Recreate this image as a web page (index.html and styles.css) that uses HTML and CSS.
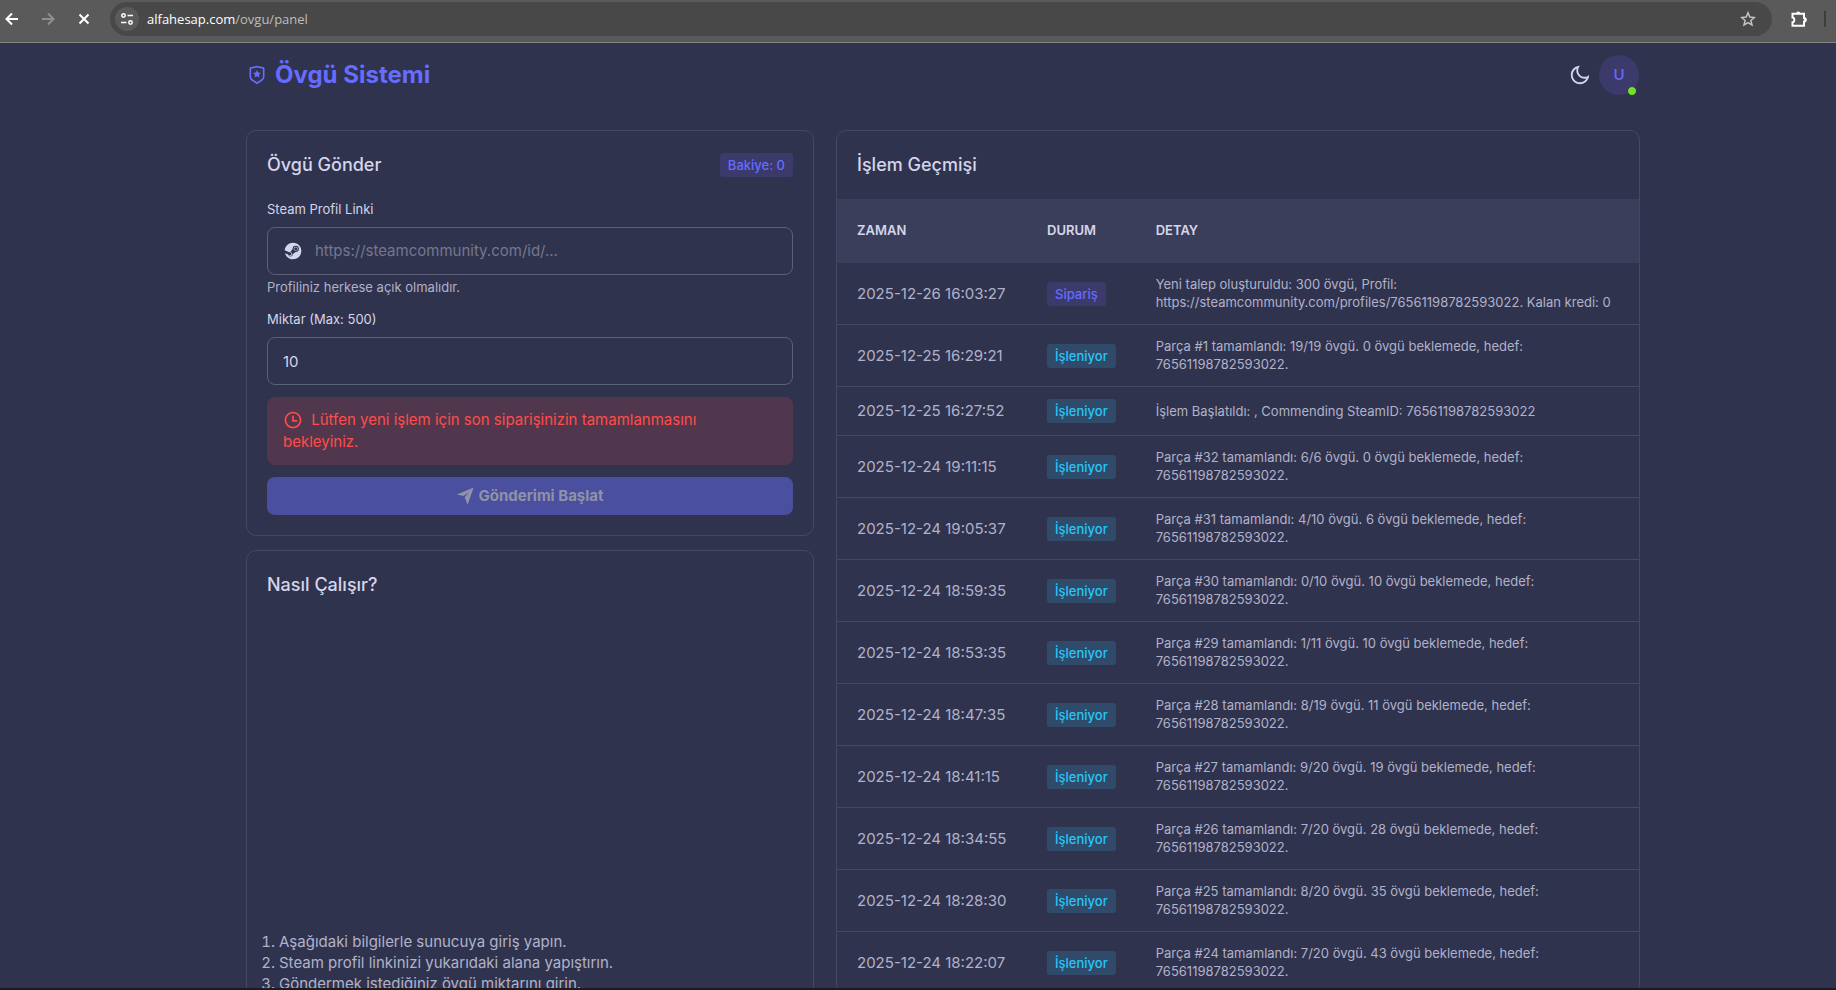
FILE: index.html
```html
<!DOCTYPE html>
<html lang="tr">

<head>
  <meta charset="UTF-8">
  <meta name="viewport" content="width=device-width, initial-scale=1.0">
  <title>Övgü Sistemi</title>
  <link rel="stylesheet" href="styles.css">
</head>

<body>
  <!-- browser bar -->
  <header class="browser">
    <button class="browser-btn" type="button" aria-label="Geri">
      <svg width="16" height="16" viewBox="0 0 16 16"><path d="M14 8H3M8 2.5L2.5 8L8 13.5" /></svg>
    </button>
    <button class="browser-btn" type="button" aria-label="İleri" disabled>
      <svg width="16" height="16" viewBox="0 0 16 16"><path d="M2 8h11M8 2.5L13.5 8L8 13.5" /></svg>
    </button>
    <button class="browser-btn" type="button" aria-label="Durdur">
      <svg width="16" height="16" viewBox="0 0 16 16"><path d="M3.5 3.5l9 9M12.5 3.5l-9 9" /></svg>
    </button>
    <div class="address">
      <button class="site-info" type="button" aria-label="Site bilgileri">
        <svg width="14" height="14" viewBox="0 0 14 14"><circle cx="3.5" cy="3.5" r="1.7" /><path d="M7.5 3.5H13M1 10.5h5.5" /><circle cx="10.5" cy="10.5" r="1.7" /></svg>
      </button>
      <a class="url" href="#">alfahesap.com<span>/ovgu/panel</span></a>
      <button class="star" type="button" aria-label="Yer işareti">
        <svg width="16" height="16" viewBox="0 0 16 16"><path d="M8 1.8l1.8 4.3 4.6.4-3.5 3 1.1 4.5L8 11.6 4 14l1.1-4.500-3.500-3 4.600-.4z" /></svg>
      </button>
    </div>
    <button class="browser-btn extensions" type="button" aria-label="Uzantılar">
      <svg width="18" height="18" viewBox="0 0 18 18"><path d="M2.5 3.7H14V8a1.800 1.800 0 0 1 0 3.600v4.100H2.500v-3.500c2.400-.3 2.400-4.200 0-4.600z" /><path class="fill" d="M6.200 3.500a2 2 0 0 1 4 0zM14.200 7.700a2 2 0 0 1 0 4z" /></svg>
    </button>
    <span class="browser-sep"></span>
  </header>

  <div class="page">
    <nav class="navbar">
      <a class="brand" href="#">
        <svg width="20" height="20" viewBox="0 0 24 24"><path d="M12 1L20.217 2.826C20.674 2.928 21 3.333 21 3.802V13.789C21 15.795 19.997 17.669 18.328 18.781L12 23L5.672 18.781C4.002 17.668 3 15.795 3 13.789V3.802C3 3.333 3.326 2.928 3.783 2.826L12 1ZM12 3.049L5 4.604V13.789C5 15.126 5.668 16.375 6.781 17.117L12 20.597L17.219 17.117C18.332 16.375 19 15.127 19 13.789V4.604L12 3.049ZM12 13.500L9.061 15.045L9.622 11.773L7.245 9.455L10.531 8.977L12 6L13.470 8.977L16.755 9.455L14.378 11.773L14.939 15.045L12 13.500Z" /></svg>
        <h1>Övgü Sistemi</h1>
      </a>
      <div class="nav-right">
        <button class="theme-btn" type="button" aria-label="Tema">
          <svg width="22" height="22" viewBox="0 0 24 24"><path d="M10 7C10 10.866 13.134 14 17 14C18.958 14 20.729 13.196 21.999 11.899C22 11.933 22 11.966 22 12C22 17.523 17.523 22 12 22C6.477 22 2 17.523 2 12C2 6.477 6.477 2 12 2C12.034 2 12.067 2 12.101 2.001C10.804 3.271 10 5.042 10 7ZM4 12C4 16.418 7.582 20 12 20C15.058 20 17.716 18.284 19.062 15.762C18.395 15.919 17.705 16 17 16C12.029 16 8 11.971 8 7C8 6.295 8.081 5.605 8.238 4.938C5.716 6.284 4 8.942 4 12Z" /></svg>
        </button>
        <button class="avatar" type="button">U<span class="online"></span></button>
      </div>
    </nav>

    <main class="row">
      <div class="col-left">
        <section class="card card-form">
          <div class="card-head">
            <h2>Övgü Gönder</h2>
            <span class="badge badge-primary">Bakiye: 0</span>
          </div>
          <form>
            <label for="steam-link">Steam Profil Linki</label>
            <div class="input-group">
              <svg width="20" height="20" viewBox="0 0 24 24"><path d="M12.004 2C6.740 2 2.427 6.060 2.020 11.220L7.390 13.440A2.840 2.840 0 0 1 9.140 12.940L11.530 9.480V9.430A3.780 3.780 0 1 1 15.310 13.210H15.220L11.810 15.650C11.810 17.300 10.560 18.540 8.990 18.540A2.840 2.840 0 0 1 6.210 16.270L2.370 14.680C3.560 18.900 7.420 22 12.004 22A10 10 0 1 0 12.004 2ZM8.280 17.170L7.050 16.660A2.130 2.130 0 1 0 8.200 13.790L9.470 14.310A1.570 1.570 0 0 1 8.280 17.170ZM17.830 9.430A2.520 2.520 0 1 0 12.790 9.430A2.520 2.520 0 0 0 17.830 9.430ZM13.420 9.420A1.890 1.890 0 1 1 17.200 9.420A1.890 1.890 0 0 1 13.420 9.420Z" /></svg>
              <input id="steam-link" type="text" placeholder="https://steamcommunity.com/id/...">
            </div>
            <p class="hint">Profiliniz herkese açık olmalıdır.</p>
            <label for="amount">Miktar (Max: 500)</label>
            <input id="amount" class="input" type="text" inputmode="numeric" value="10">
            <div class="alert">
              <svg width="20" height="20" viewBox="0 0 24 24"><path d="M12 22C6.477 22 2 17.523 2 12C2 6.477 6.477 2 12 2C17.523 2 22 6.477 22 12C22 17.523 17.523 22 12 22ZM12 20C16.418 20 20 16.418 20 12C20 7.582 16.418 4 12 4C7.582 4 4 7.582 4 12C4 16.418 7.582 20 12 20ZM13 12H17V14H11V7H13V12Z" /></svg>
              Lütfen yeni işlem için son siparişinizin tamamlanmasını bekleyiniz.
            </div>
            <button class="submit" type="submit" disabled>
              <svg width="18" height="18" viewBox="0 0 24 24"><path d="M1 10L23.500 0.500L15.500 23.500L11.500 13.500L17 7L10 12Z" /></svg>
              Gönderimi Başlat
            </button>
          </form>
        </section>

        <section class="card card-how">
          <h2>Nasıl Çalışır?</h2>
          <div class="video"></div>
          <ol>
            <li>Aşağıdaki bilgilerle sunucuya giriş yapın.</li>
            <li>Steam profil linkinizi yukarıdaki alana yapıştırın.</li>
            <li>Göndermek istediğiniz övgü miktarını girin.</li>
          </ol>
        </section>
      </div>

      <section class="card card-history">
        <h2>İşlem Geçmişi</h2>
        <table>
          <thead>
            <tr>
              <th class="time">ZAMAN</th>
              <th class="state">DURUM</th>
              <th>DETAY</th>
            </tr>
          </thead>
          <tbody>
            <tr>
              <td>2025-12-26 16:03:27</td>
              <td><span class="badge badge-primary">Sipariş</span></td>
              <td class="detail">Yeni talep oluşturuldu: 300 övgü, Profil: https://steamcommunity.com/profiles/76561198782593022. Kalan kredi: 0</td>
            </tr>
            <tr>
              <td>2025-12-25 16:29:21</td>
              <td><span class="badge badge-info">İşleniyor</span></td>
              <td class="detail">Parça #1 tamamlandı: 19/19 övgü. 0 övgü beklemede, hedef: 76561198782593022.</td>
            </tr>
            <tr>
              <td>2025-12-25 16:27:52</td>
              <td><span class="badge badge-info">İşleniyor</span></td>
              <td class="detail">İşlem Başlatıldı: , Commending SteamID: 76561198782593022</td>
            </tr>
            <tr>
              <td>2025-12-24 19:11:15</td>
              <td><span class="badge badge-info">İşleniyor</span></td>
              <td class="detail">Parça #32 tamamlandı: 6/6 övgü. 0 övgü beklemede, hedef: 76561198782593022.</td>
            </tr>
            <tr>
              <td>2025-12-24 19:05:37</td>
              <td><span class="badge badge-info">İşleniyor</span></td>
              <td class="detail">Parça #31 tamamlandı: 4/10 övgü. 6 övgü beklemede, hedef: 76561198782593022.</td>
            </tr>
            <tr>
              <td>2025-12-24 18:59:35</td>
              <td><span class="badge badge-info">İşleniyor</span></td>
              <td class="detail">Parça #30 tamamlandı: 0/10 övgü. 10 övgü beklemede, hedef: 76561198782593022.</td>
            </tr>
            <tr>
              <td>2025-12-24 18:53:35</td>
              <td><span class="badge badge-info">İşleniyor</span></td>
              <td class="detail">Parça #29 tamamlandı: 1/11 övgü. 10 övgü beklemede, hedef: 76561198782593022.</td>
            </tr>
            <tr>
              <td>2025-12-24 18:47:35</td>
              <td><span class="badge badge-info">İşleniyor</span></td>
              <td class="detail">Parça #28 tamamlandı: 8/19 övgü. 11 övgü beklemede, hedef: 76561198782593022.</td>
            </tr>
            <tr>
              <td>2025-12-24 18:41:15</td>
              <td><span class="badge badge-info">İşleniyor</span></td>
              <td class="detail">Parça #27 tamamlandı: 9/20 övgü. 19 övgü beklemede, hedef: 76561198782593022.</td>
            </tr>
            <tr>
              <td>2025-12-24 18:34:55</td>
              <td><span class="badge badge-info">İşleniyor</span></td>
              <td class="detail">Parça #26 tamamlandı: 7/20 övgü. 28 övgü beklemede, hedef: 76561198782593022.</td>
            </tr>
            <tr>
              <td>2025-12-24 18:28:30</td>
              <td><span class="badge badge-info">İşleniyor</span></td>
              <td class="detail">Parça #25 tamamlandı: 8/20 övgü. 35 övgü beklemede, hedef: 76561198782593022.</td>
            </tr>
            <tr>
              <td>2025-12-24 18:22:07</td>
              <td><span class="badge badge-info">İşleniyor</span></td>
              <td class="detail">Parça #24 tamamlandı: 7/20 övgü. 43 övgü beklemede, hedef: 76561198782593022.</td>
            </tr>
          </tbody>
        </table>
      </section>
    </main>
  </div>
</body>

</html>
```
FILE: styles.css
```css
* {
  box-sizing: border-box;
}

body {
  display: flex;
  flex-direction: column;
  height: 100vh;
  margin: 0;
  overflow: hidden;
  background-color: #30334e;
  color: #b0b2c9;
  font-family: Inter, "Liberation Sans", sans-serif;
  font-size: 15px;
  line-height: 22px;
}

h1,
h2,
p,
ol {
  margin: 0;
}

button,
input {
  border: 0;
  padding: 0;
  background: none;
  color: inherit;
  font: inherit;
}

a {
  color: inherit;
  text-decoration: none;
}

svg {
  fill: currentColor;
  flex: none;
}

/* browser bar */
.browser {
  display: flex;
  flex: none;
  align-items: center;
  height: 43px;
  padding: 0 10px 5px 4px;
  border-bottom: 1px solid #83857f;
  background-color: #5a5a5a;
  color: #fff;
}

.browser svg {
  display: block;
  fill: none;
  stroke: currentColor;
  stroke-width: 2;
}

.browser .fill {
  fill: currentColor;
  stroke: none;
}

.browser-btn {
  margin-right: 20px;
}

.browser-btn:disabled {
  color: #8f8f8f;
}

.address {
  display: flex;
  flex: 1;
  align-items: center;
  height: 34px;
  margin-left: -2px;
  padding: 0 16px 0 5px;
  border-radius: 17px;
  background-color: #484848;
}

.site-info {
  display: flex;
  justify-content: center;
  align-items: center;
  width: 24px;
  height: 24px;
  border-radius: 50%;
  background-color: #5a5a5a;
}

.site-info svg {
  stroke-width: 1.5;
}

.url {
  flex: 1;
  margin-left: 8px;
  font-family: "Open Sans", sans-serif;
  font-size: 13px;
}

.url span {
  color: #bdbdbd;
}

.star {
  color: #c4c4c4;
}

.star svg {
  stroke-width: 1.5;
}

.extensions {
  margin: 0 16px 0 18px;
}

.browser-sep {
  width: 2px;
  height: 16px;
  background-color: #3d3d3d;
}

/* page */
.page {
  flex: 1;
  min-height: 0;
  overflow: hidden;
  padding: 0 196px 0 246px;
  border-bottom: 2px solid #1d1b1c;
}

.navbar {
  display: flex;
  justify-content: space-between;
  align-items: center;
  height: 64px;
  padding: 0 1px;
}

.brand {
  display: flex;
  align-items: center;
  gap: 8px;
  color: #666cff;
}

.brand h1 {
  font-size: 24px;
  font-weight: 700;
  line-height: 24px;
}

.nav-right {
  display: flex;
  align-items: center;
  gap: 8px;
  color: #d5d5eb;
}

.theme-btn svg {
  display: block;
}

.avatar {
  position: relative;
  width: 40px;
  height: 40px;
  border-radius: 50%;
  background-color: #3b3a6b;
  color: #666cff;
  font-weight: 500;
}

.online {
  position: absolute;
  right: 2px;
  bottom: -1px;
  width: 10px;
  height: 10px;
  border: 1px solid #30334e;
  border-radius: 50%;
  background-color: #72e128;
}

.row {
  display: grid;
  grid-template-columns: repeat(12, 1fr);
  align-items: start;
  gap: 22px;
  padding-top: 23px;
}

.col-left {
  grid-column: span 5;
}

.card {
  border: 1px solid #464863;
  border-radius: 10px;
}

.card h2 {
  color: #d5d5eb;
  font-size: 18px;
  font-weight: 500;
  line-height: 28px;
}

.card-form {
  margin-bottom: 14px;
  padding: 20px;
}

.card-head {
  display: flex;
  justify-content: space-between;
  align-items: center;
  margin-bottom: 20px;
}

.badge {
  display: inline-block;
  padding: 0 8px;
  border-radius: 3px;
  font-size: 13px;
  font-weight: 500;
  line-height: 24px;
}

.badge-primary {
  background-color: #3b3a6b;
  color: #666cff;
}

.badge-info {
  background-color: #2f4b69;
  color: #26c6f9;
}

label {
  display: block;
  margin-bottom: 8px;
  color: #d5d5eb;
  font-size: 13px;
  line-height: 20px;
}

.input,
.input-group {
  width: 100%;
  height: 48px;
  border: 1px solid #5e5f79;
  border-radius: 8px;
  color: #d5d5eb;
}

.input {
  display: block;
  padding: 0 15px;
}

.input-group {
  display: flex;
  align-items: center;
  gap: 12px;
  padding: 0 15px;
}

.input-group input {
  flex: 1;
  outline: 0;
}

.input-group input::placeholder {
  color: #75778f;
  opacity: 1;
}

.hint {
  margin: 2px 0 12px;
  font-size: 13px;
  line-height: 20px;
}

.alert {
  margin: 12px 0;
  padding: 12px 48px 12px 16px;
  border-radius: 8px;
  background-color: #51374d;
  color: #ff4d49;
}

.alert svg {
  margin-right: 4px;
  vertical-align: -5px;
}

.submit {
  display: flex;
  justify-content: center;
  align-items: center;
  gap: 4px;
  width: 100%;
  height: 38px;
  border-radius: 8px;
  background-color: #4a4f9f;
  color: #8f92a8;
  font-weight: 700;
}

.card-how {
  padding: 20px;
}

.video {
  height: 332px;
}

.card-how ol {
  padding-left: 12px;
  line-height: 21px;
}

/* history */
.card-history {
  grid-column: span 7;
  overflow: hidden;
}

.card-history h2 {
  padding: 20px;
}

table {
  width: 100%;
  border-collapse: collapse;
}

th {
  height: 64px;
  padding: 0 20px 2px;
  background-color: #3b3e5a;
  color: #d5d5eb;
  font-size: 13px;
  font-weight: 600;
  text-align: left;
}

.time {
  width: 190px;
}

.state {
  width: 108px;
}

td {
  height: 49px;
  padding: 12px 20px;
  border-bottom: 1px solid #464863;
  white-space: nowrap;
}

td.detail {
  padding-bottom: 13px;
  font-size: 13px;
  line-height: 18px;
  white-space: normal;
}
```
